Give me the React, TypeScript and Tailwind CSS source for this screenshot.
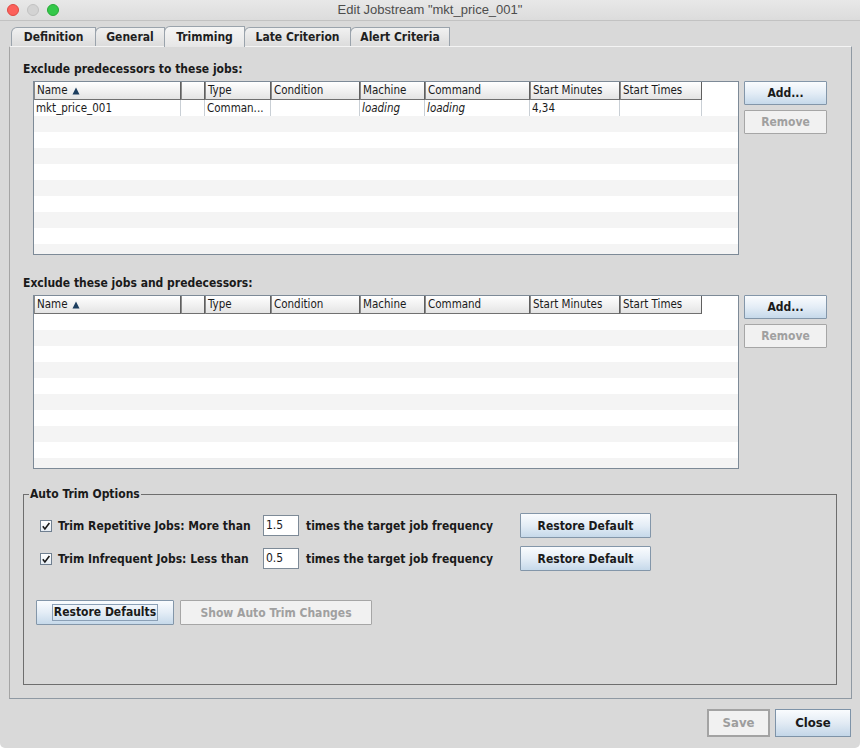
import React from "react";

const UI = "font-['DejaVu_Sans_Condensed','DejaVu_Sans',sans-serif]";

const columns = [
  { label: "Name", w: 147, sort: true },
  { label: "", w: 24 },
  { label: "Type", w: 66 },
  { label: "Condition", w: 89 },
  { label: "Machine", w: 65 },
  { label: "Command", w: 105 },
  { label: "Start Minutes", w: 90 },
  { label: "Start Times", w: 82 },
];

interface Row {
  cells: { text: string; italic?: boolean }[];
}

function SortArrow() {
  return (
    <svg width="8" height="8" viewBox="0 0 8 8" className="ml-[4px] inline-block">
      <path d="M4 0.5 L7.5 7.5 L0.5 7.5 Z" fill="#1c3d5e" />
    </svg>
  );
}

function JobTable({ rows }: { rows: Row[] }) {
  const stripes = Array.from({ length: 10 });
  return (
    <div className="w-[706px] h-[174px] border border-[#7d8a97] bg-white overflow-hidden flex flex-col">
      {/* header */}
      <div className="flex h-[18px] shrink-0">
        {columns.map((c, i) => (
          <div
            key={i}
            style={{ width: c.w }}
            className="h-[18px] shrink-0 border-l border-r border-b border-l-[#8a8a8a] border-r-[#5f5f5f] border-b-[#707070] bg-gradient-to-b from-[#ffffff] to-[#e4e4e4] pl-[2px] text-[11.5px] leading-[17px] text-[#1a1a1a] flex items-center"
          >
            {c.label}
            {c.sort && <SortArrow />}
          </div>
        ))}
        <div className="flex-1 h-[18px] bg-white" />
      </div>
      {/* rows */}
      <div className="flex-1 flex flex-col">
        {stripes.map((_, r) => {
          const row = rows[r];
          return (
            <div
              key={r}
              className={`h-[16px] shrink-0 flex ${r % 2 === 1 ? "bg-[#f4f4f4]" : "bg-white"}`}
            >
              {row &&
                columns.map((c, i) => (
                  <div
                    key={i}
                    style={{ width: c.w }}
                    className={`h-[16px] shrink-0 border-r border-[#c9cfd5] pl-[2px] text-[11.5px] leading-[16px] text-[#1a1a1a] whitespace-nowrap overflow-hidden ${
                      row.cells[i]?.italic ? "italic" : ""
                    }`}
                  >
                    {row.cells[i]?.text}
                  </div>
                ))}
            </div>
          );
        })}
      </div>
    </div>
  );
}

function BlueButton({
  children,
  className = "",
  focused = false,
}: {
  children: React.ReactNode;
  className?: string;
  focused?: boolean;
}) {
  return (
    <div
      className={`flex items-center justify-center border border-[#8396a9] rounded-[1px] bg-gradient-to-b from-[#fafcfe] via-[#e4edf6] to-[#c6d9ea] text-[12px] font-bold text-[#1a1a1a] ${className}`}
    >
      {focused ? (
        <span className="border border-[#8ba0b6] px-[1px] leading-[15px]">{children}</span>
      ) : (
        children
      )}
    </div>
  );
}

function DisabledButton({ children, className = "" }: { children: React.ReactNode; className?: string }) {
  return (
    <div
      className={`flex items-center justify-center border border-[#a6a6a6] rounded-[1px] bg-[#f1f1f1] text-[12px] font-bold text-[#a0a0a0] ${className}`}
    >
      {children}
    </div>
  );
}

function CheckBox() {
  return (
    <div className="w-[12px] h-[12px] border border-[#6f7f90] bg-gradient-to-b from-white to-[#e6edf4] flex items-center justify-center shrink-0">
      <svg width="10" height="10" viewBox="0 0 10 10">
        <path d="M1.8 5.2 L3.9 8 L8.4 2" stroke="#1a1a1a" strokeWidth="1.6" fill="none" />
      </svg>
    </div>
  );
}

function TrimRow({ label, value }: { label: string; value: string }) {
  return (
    <div className="flex items-center h-[25px]">
      <div className="ml-[16px]">
        <CheckBox />
      </div>
      <span className="ml-[6px] w-[205px] text-[12px] font-bold text-[#1a1a1a] whitespace-nowrap">{label}</span>
      <div className="w-[36px] h-[21px] border border-[#7d8a97] bg-white text-[12px] leading-[19px] pl-[2px] text-[#1a1a1a]">
        {value}
      </div>
      <span className="ml-[7px] w-[214px] text-[12px] font-bold text-[#1a1a1a] whitespace-nowrap">
        times the target job frequency
      </span>
      <BlueButton className="w-[131px] h-[25px]">Restore Default</BlueButton>
    </div>
  );
}

const tabs = [
  { label: "Definition", w: 85 },
  { label: "General", w: 70 },
  { label: "Trimming", w: 81, active: true },
  { label: "Late Criterion", w: 107 },
  { label: "Alert Criteria", w: 100 },
];

export default function App() {
  const firstRows: Row[] = [
    {
      cells: [
        { text: "mkt_price_001" },
        { text: "" },
        { text: "Comman..." },
        { text: "" },
        { text: "loading", italic: true },
        { text: "loading", italic: true },
        { text: "4,34" },
        { text: "" },
      ],
    },
  ];

  return (
    <div className={`w-[860px] h-[748px] bg-[#d9d9d9] flex flex-col overflow-hidden rounded-b-[5px] ${UI}`}>
      {/* title bar */}
      <div className="h-[21px] shrink-0 relative flex items-center justify-center bg-gradient-to-b from-[#e8e8e8] to-[#dcdcdc] border-b border-[#c2c2c2]">
        <div className="absolute left-[7px] top-[4px] flex gap-[8px]">
          <div className="w-[12px] h-[12px] rounded-full bg-[#fc605b] border border-[#de4a43]" />
          <div className="w-[12px] h-[12px] rounded-full bg-[#d3d3d3] border border-[#c2c2c2]" />
          <div className="w-[12px] h-[12px] rounded-full bg-[#34c84a] border border-[#27aa37]" />
        </div>
        <span className="font-['Liberation_Sans',sans-serif] text-[13px] text-[#4d4d4d]">
          Edit Jobstream "mkt_price_001"
        </span>
      </div>

      {/* tabs */}
      <div className="flex items-end ml-[11px] mt-[5px] h-[20px] shrink-0">
        {tabs.map((t, i) => (
          <div
            key={i}
            style={{ width: t.w }}
            className={`-mr-px flex items-center justify-center rounded-tl-[6px] border border-b-0 border-[#9aa3ac] text-[12px] font-bold text-[#1f1f1f] ${
              t.active
                ? "h-[20px] bg-gradient-to-b from-[#f6f6f6] to-[#e6e6e6] relative z-10 mb-[-1px] h-[21px]"
                : "h-[19px] bg-gradient-to-b from-[#f1f1f1] to-[#dcdcdc]"
            }`}
          >
            {t.label}
          </div>
        ))}
      </div>

      {/* panel */}
      <div className="ml-[9px] w-[843px] h-[653px] shrink-0 border border-[#8f99a3] border-t-[#f4f4f4] border-l-[#a5a5a5] bg-[#d9d9d9] pt-[14px] px-[13px] flex flex-col">
        <div className="h-[16px] leading-[16px] text-[12px] font-bold text-[#1a1a1a]">
          Exclude predecessors to these jobs:
        </div>
        <div className="mt-[4px] ml-[10px] flex">
          <JobTable rows={firstRows} />
          <div className="ml-[5px] flex flex-col gap-[5px]">
            <BlueButton className="w-[83px] h-[24px]">Add...</BlueButton>
            <DisabledButton className="w-[83px] h-[24px]">Remove</DisabledButton>
          </div>
        </div>

        <div className="mt-[20px] h-[16px] leading-[16px] text-[12px] font-bold text-[#1a1a1a]">
          Exclude these jobs and predecessors:
        </div>
        <div className="mt-[4px] ml-[10px] flex">
          <JobTable rows={[]} />
          <div className="ml-[5px] flex flex-col gap-[5px]">
            <BlueButton className="w-[83px] h-[24px]">Add...</BlueButton>
            <DisabledButton className="w-[83px] h-[24px]">Remove</DisabledButton>
          </div>
        </div>

        <fieldset className="mt-[18px] w-[814px] h-[198px] border border-[#6e6e6e] flex flex-col">
          <legend className="ml-[5px] px-[1px] text-[12px] font-bold leading-[14px] text-[#1a1a1a]">
            Auto Trim Options
          </legend>
          <div className="mt-[12px]">
            <TrimRow label="Trim Repetitive Jobs: More than" value="1.5" />
          </div>
          <div className="mt-[8px]">
            <TrimRow label="Trim Infrequent Jobs: Less than" value="0.5" />
          </div>
          <div className="mt-[29px] ml-[12px] flex gap-[6px]">
            <BlueButton focused className="w-[138px] h-[25px]">
              Restore Defaults
            </BlueButton>
            <DisabledButton className="w-[192px] h-[25px]">Show Auto Trim Changes</DisabledButton>
          </div>
        </fieldset>
      </div>

      {/* footer */}
      <div className="mt-[10px] mr-[9px] flex justify-end gap-[5px]">
        <div className="w-[63px] h-[28px] border-2 border-[#a3a3a3] bg-[#f1f1f1] flex items-center justify-center text-[13px] font-bold text-[#9d9d9d]">
          Save
        </div>
        <div className="w-[76px] h-[28px] border border-[#7e93a8] bg-gradient-to-b from-[#fafcfe] via-[#e2ebf4] to-[#c3d6e8] flex items-center justify-center text-[13px] font-bold text-[#1a1a1a]">
          Close
        </div>
      </div>
    </div>
  );
}
